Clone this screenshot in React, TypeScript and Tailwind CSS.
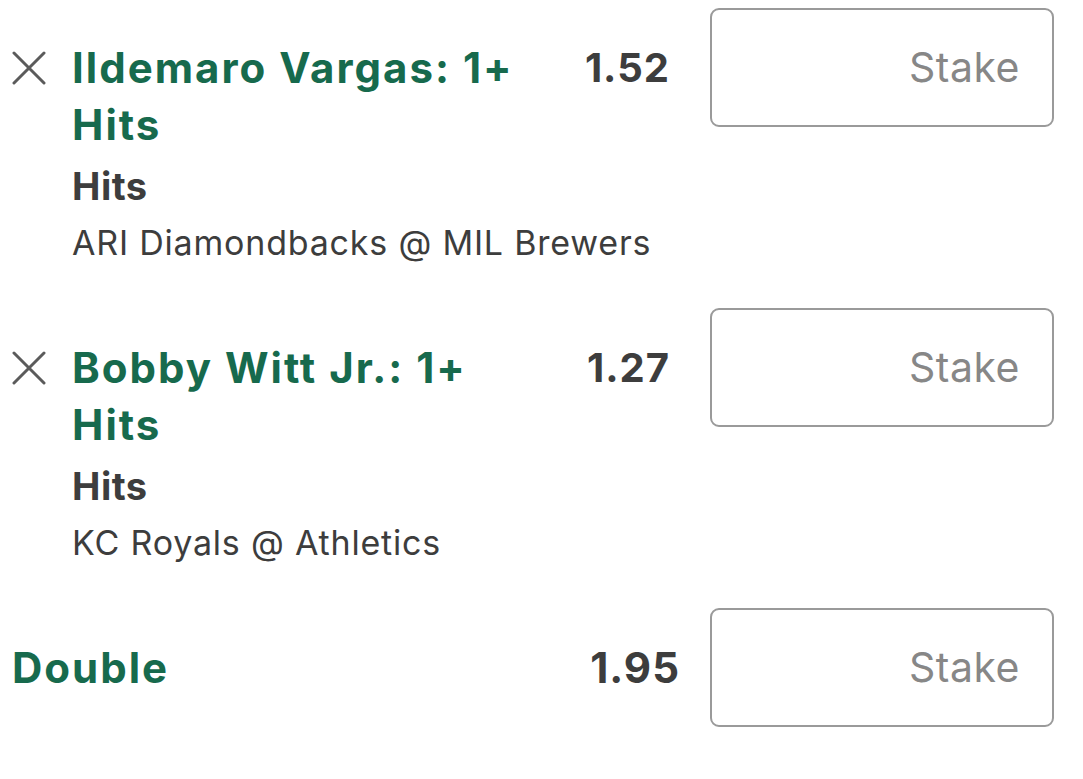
import * as React from 'react'

type Leg = {
  id: string
  selection: string
  market: string
  event: string
  odds: string
}

const legs: Leg[] = [
  {
    id: 'vargas',
    selection: 'Ildemaro Vargas: 1+ Hits',
    market: 'Hits',
    event: 'ARI Diamondbacks @ MIL Brewers',
    odds: '1.52',
  },
  {
    id: 'witt',
    selection: 'Bobby Witt Jr.: 1+ Hits',
    market: 'Hits',
    event: 'KC Royals @ Athletics',
    odds: '1.27',
  },
]

const font = { fontFamily: 'Inter, "Liberation Sans", sans-serif' }

function CloseIcon() {
  return (
    <svg viewBox="0 0 34 34" className="size-[34px] text-[#5b5b5b]" fill="none">
      <path d="M2 2L32 32M32 2L2 32" stroke="currentColor" strokeWidth="3" strokeLinecap="round" />
    </svg>
  )
}

function StakeInput() {
  return (
    <div className="flex h-[119px] w-[344px] shrink-0 items-center justify-end rounded-[9px] border-[2.5px] border-[#9a9a9a] pr-[32px]">
      <span className="text-[41px] leading-none tracking-[0.5px] text-[#878787]">Stake</span>
    </div>
  )
}

function LegRow({ leg }: { leg: Leg }) {
  return (
    <li className="flex items-start pb-[41px]">
      <div className="flex flex-1 flex-col pt-[31px]">
        <div className="flex items-start">
          <div className="flex h-[57px] w-[60px] shrink-0 items-center">
            <button type="button" aria-label="Remove selection">
              <CloseIcon />
            </button>
          </div>
          <h2 className="max-w-[470px] flex-1 text-[42px] font-bold leading-[57px] tracking-[2px] text-[#176a4d]">
            {leg.selection}
          </h2>
          <span className="ml-auto pr-[40px] text-[40px] font-bold leading-[57px] tracking-[1px] text-[#3d3d3d]">
            {leg.odds}
          </span>
        </div>
        <p className="mt-[9px] pl-[60px] text-[38px] font-bold leading-[48px] tracking-[0.5px] text-[#3d3d3d]">
          {leg.market}
        </p>
        <p className="mt-[9px] pl-[60px] text-[34px] leading-[48px] tracking-[0.8px] text-[#3d3d3d]">
          {leg.event}
        </p>
      </div>
      <StakeInput />
    </li>
  )
}

export default function App() {
  return (
    <main className="min-h-screen bg-white pl-[12px] pr-[29px] pt-[8px]" style={font}>
      <ul>
        {legs.map((leg) => (
          <LegRow key={leg.id} leg={leg} />
        ))}
        <li className="flex items-center">
          <h2 className="flex-1 text-[42px] font-bold leading-[57px] tracking-[2px] text-[#176a4d]">
            Double
          </h2>
          <span className="pr-[30px] text-[42px] font-bold leading-[57px] tracking-[1px] text-[#3d3d3d]">
            1.95
          </span>
          <StakeInput />
        </li>
      </ul>
    </main>
  )
}
